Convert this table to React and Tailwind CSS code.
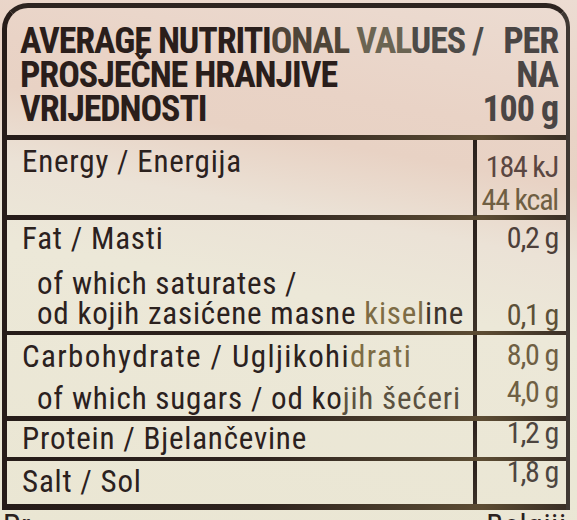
const cond = "font-['Roboto_Condensed','Liberation_Sans_Narrow','DejaVu_Sans_Condensed',sans-serif]";

function Divider({ h }) {
  return (
    <div
      className={`${h} bg-[linear-gradient(90deg,#261c19_0%,#2e231e_45%,#4a3d2c_70%,#5c4c33_85%,#3a2f26_100%)]`}
    />
  );
}

function Row({ height, left, right }) {
  return (
    <div className={`grid grid-cols-[466px_4px_1fr] ${height}`}>
      <div className="whitespace-nowrap tracking-[0.8px]">{left}</div>
      <div className="bg-[linear-gradient(180deg,#2a201c,#3b3128)]" />
      <div className="whitespace-nowrap pr-[8px] text-right text-[30px] tracking-[-1.2px]">{right}</div>
    </div>
  );
}

export default function App() {
  return (
    <div
      className={`relative h-[520px] w-[577px] overflow-hidden bg-[linear-gradient(190deg,#ecdcd2_0%,#e9d3c6_22%,#e8d2c4_30%,#ebe2d6_42%,#ece8d8_55%,#eae6d3_100%)] ${cond} text-[#2b211e]`}
    >
      <div className="ml-[2px] mt-[3px] w-[568px] rounded-tl-[26px] rounded-tr-[24px] border-l-[5px] border-r-[4px] border-t-[5px] border-l-[#271c19] border-r-[#3f3833] border-t-[#2d2420]">
        {/* header */}
        <div className="flex h-[127px] whitespace-nowrap pl-[13px] pr-[8px] pt-[16px] text-[36px] font-bold leading-[34px] tracking-[-1.1px]">
          <div className="w-[430px] shrink-0">
            <div>
              <span className="text-[#2a1e1b]">AVERAGE NUTRITI</span>
              <span className="text-[#4f4538]">ONAL </span>
              <span className="text-[#6b6553]">VAL</span>
              <span className="text-[#4d4b48]">UES /</span>
            </div>
            <div className="text-[#2a1e1b]">PROSJEČNE HRANJIVE</div>
            <div className="text-[#2a1e1b]">VRIJEDNOSTI</div>
          </div>
          <div className="flex-1 text-right text-[#4a4544]">
            <div>PER</div>
            <div>NA</div>
            <div>100 g</div>
          </div>
        </div>
        <Divider h="h-[5px]" />

        <div className="text-[31px] font-normal leading-[31px]">
          <Row
            height="h-[75px]"
            left={<div className="pl-[15px] pt-[6px]">Energy / Energija</div>}
            right={
              <div className="pt-[10px] leading-[33px]">
                <div className="text-[#5a4641]">184 kJ</div>
                <div className="text-[#6f5f43]">44 kcal</div>
              </div>
            }
          />
          <Divider h="h-[5px]" />

          <Row
            height="h-[111px]"
            left={
              <div className="pl-[15px] pt-[3px]">
                <div>Fat / Masti</div>
                <div className="mt-[15px] pl-[15px] leading-[30px]">
                  <div>of which saturates /</div>
                  <div>
                    od kojih zasićene masne <span className="text-[#7d6c45]">kisel</span>
                    <span className="text-[#3d342b]">ine</span>
                  </div>
                </div>
              </div>
            }
            right={
              <div className="pt-[2px] text-[#4d3f3a]">
                <div>0,2 g</div>
                <div className="mt-[46px] text-[#5c5038]">0,1 g</div>
              </div>
            }
          />
          <Divider h="h-[4px]" />

          <Row
            height="h-[81px]"
            left={
              <div className="pl-[15px] pt-[6px]">
                <div className="tracking-[1.4px]">
                  Carbohydrate / Ugljikohi<span className="text-[#7d6c45]">drati</span>
                </div>
                <div className="mt-[11px] pl-[15px]">
                  of which sugars / od ko<span className="text-[#5b5140]">jih šećeri</span>
                </div>
              </div>
            }
            right={
              <div className="pt-[4px] text-[#6f5f43]">
                <div>8,0 g</div>
                <div className="mt-[6px]">4,0 g</div>
              </div>
            }
          />
          <Divider h="h-[5px]" />

          <Row
            height="h-[36px]"
            left={<div className="pl-[15px] pt-[2px]">Protein / Bjelančevine</div>}
            right={<div className="-mt-[4px] text-[#4d4540]">1,2 g</div>}
          />
          <Divider h="h-[4px]" />

          <Row
            height="h-[43px]"
            left={<div className="pl-[15px] pt-[5px]">Salt / Sol</div>}
            right={<div className="-mt-[5px] text-[#4d4540]">1,8 g</div>}
          />
          <Divider h="h-[6px]" />
        </div>
      </div>

      <div className="flex justify-between pl-[3px] pr-[10px] text-[31px] leading-[31px] tracking-[0.8px]">
        <span>Pr</span>
        <span>Belgiji</span>
      </div>
    </div>
  );
}
